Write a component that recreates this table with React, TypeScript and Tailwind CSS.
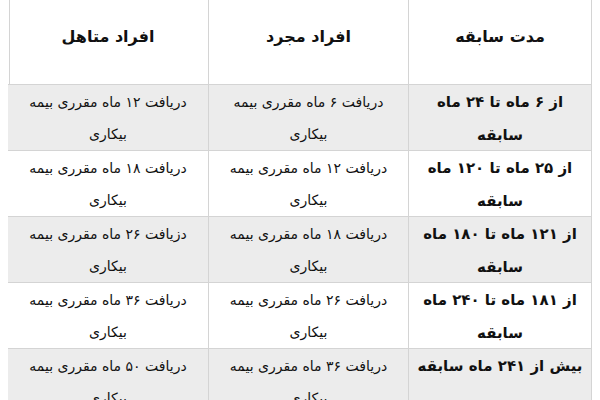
const rows = [
  { range: 'از ۶ ماه تا ۲۴ ماه سابقه', single: 'دریافت ۶ ماه مقرری بیمه بیکاری', married: 'دریافت ۱۲ ماه مقرری بیمه بیکاری' },
  { range: 'از ۲۵ ماه تا ۱۲۰ ماه سابقه', single: 'دریافت ۱۲ ماه مقرری بیمه بیکاری', married: 'دریافت ۱۸ ماه مقرری بیمه بیکاری' },
  { range: 'از ۱۲۱ ماه تا ۱۸۰ ماه سابقه', single: 'دریافت ۱۸ ماه مقرری بیمه بیکاری', married: 'دزیافت ۲۶ ماه مقرری بیمه بیکاری' },
  { range: 'از ۱۸۱ ماه تا ۲۴۰ ماه سابقه', single: 'دریافت ۲۶ ماه مقرری بیمه بیکاری', married: 'دریافت ۳۶ ماه مقرری بیمه بیکاری' },
  { range: 'بیش از ۲۴۱ ماه سابقه', single: 'دریافت ۳۶ ماه مقرری بیمه بیکاری', married: 'دریافت ۵۰ ماه مقرری بیمه بیکاری' },
];

export default function App() {
  return (
    <div className="h-[400px] w-[600px] overflow-hidden bg-white pl-[9px] pr-[8px] font-['DejaVu_Sans',sans-serif] text-[#111]">
      <div dir="rtl" className="grid grid-cols-[182px_200px_201px] border-l border-r border-[#d4d4d4]">
        <div className="flex h-[85px] items-center justify-center border-b border-[#d4d4d4] pb-[10px] text-[16px] font-bold">
          مدت سابقه
        </div>
        <div className="flex h-[85px] items-center justify-center border-b border-r border-[#d4d4d4] pb-[10px] text-[16px] font-bold">
          افراد مجرد
        </div>
        <div className="flex h-[85px] items-center justify-center border-b border-r border-[#d4d4d4] pb-[10px] text-[16px] font-bold">
          افراد متاهل
        </div>
        {rows.map((row, i) => {
          const bg = i % 2 === 0 ? 'bg-[#ececec]' : 'bg-white';
          return [
            <div key={`r${i}`} className={`h-[66px] border-b border-[#d4d4d4] px-[4px] pt-[1px] text-center text-[15px] font-bold leading-[33px] ${bg}`}>
              {row.range}
            </div>,
            <div key={`s${i}`} className={`h-[66px] border-b border-r border-[#d4d4d4] px-4 pt-[1px] text-center text-[14px] leading-[32px] ${bg}`}>
              {row.single}
            </div>,
            <div key={`m${i}`} className={`h-[66px] border-b border-r border-[#d4d4d4] px-4 pt-[1px] text-center text-[14px] leading-[32px] ${bg}`}>
              {row.married}
            </div>,
          ];
        })}
      </div>
    </div>
  );
}
